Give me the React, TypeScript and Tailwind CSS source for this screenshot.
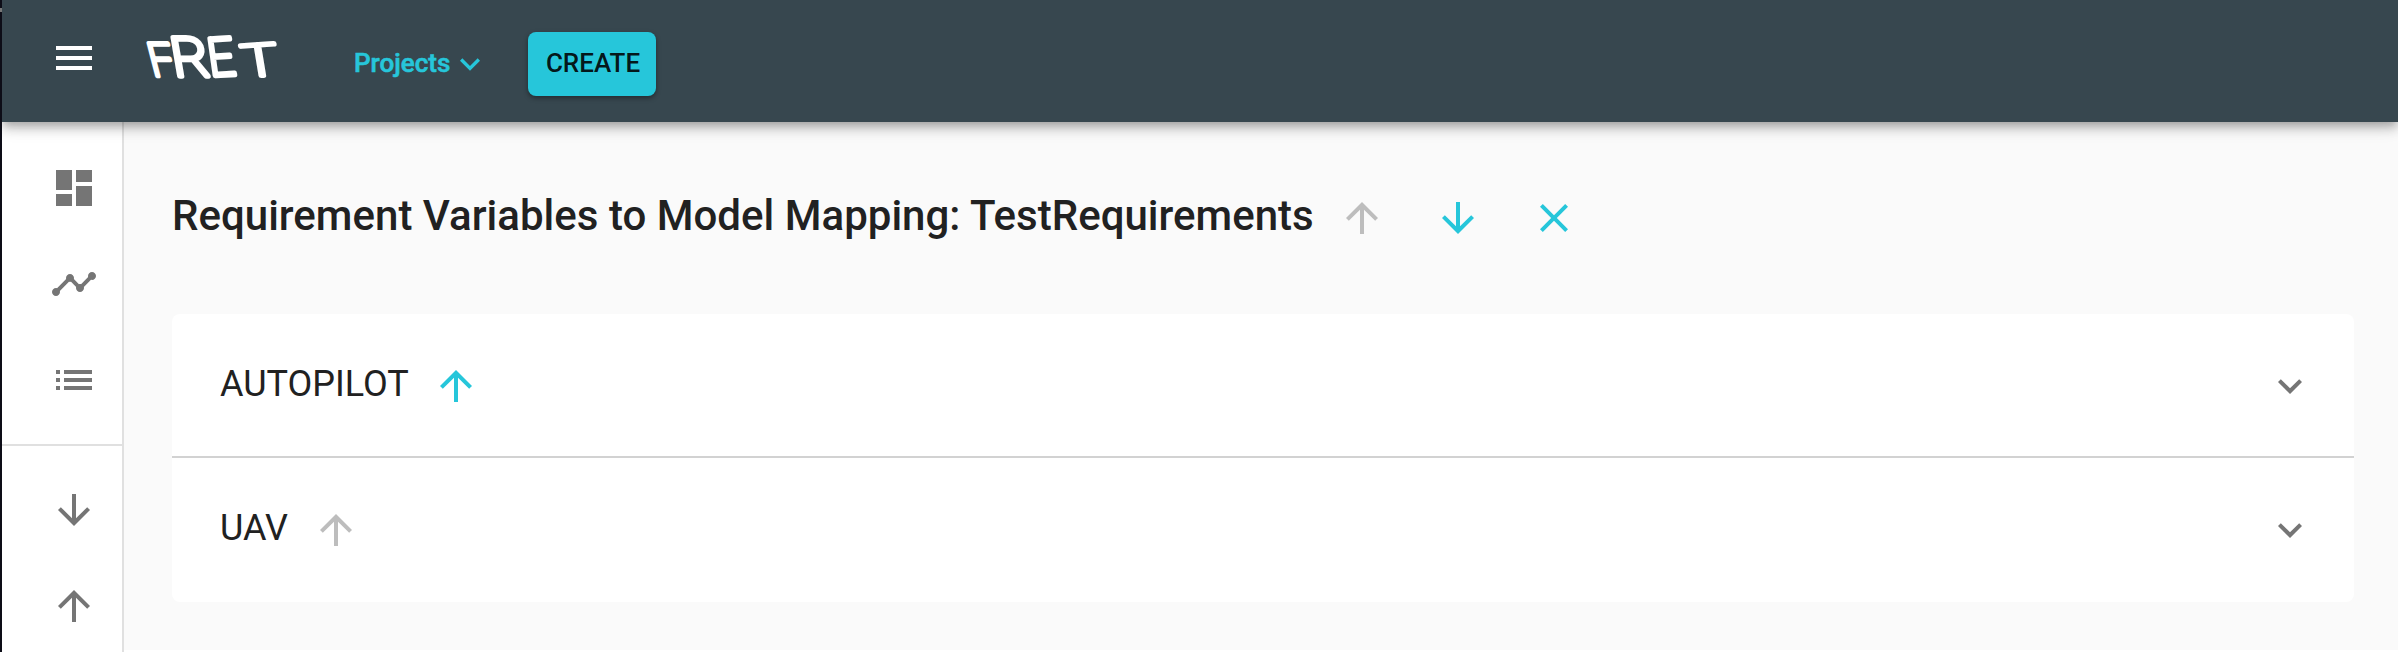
import React from "react";

const ICONS = {
  menu: "M3 18h18v-2H3v2zm0-5h18v-2H3v2zm0-7v2h18V6H3z",
  dashboard: "M3 13h8V3H3v10zm0 8h8v-6H3v6zm10 0h8V11h-8v10zm0-18v6h8V3h-8z",
  timeline:
    "M23 8c0 1.1-.9 2-2 2-.18 0-.35-.02-.51-.07l-3.56 3.55c.05.16.07.34.07.52 0 1.1-.9 2-2 2s-2-.9-2-2c0-.18.02-.36.07-.52l-2.55-2.55c-.16.05-.34.07-.52.07s-.36-.02-.52-.07l-4.55 4.56c.05.16.07.33.07.51 0 1.1-.9 2-2 2s-2-.9-2-2 .9-2 2-2c.18 0 .35.02.51.07l4.56-4.55C8.02 9.36 8 9.18 8 9c0-1.1.9-2 2-2s2 .9 2 2c0 .18-.02.36-.07.52l2.55 2.55c.16-.05.34-.07.52-.07s.36.02.52.07l3.55-3.56C19.02 8.35 19 8.18 19 8c0-1.1.9-2 2-2s2 .9 2 2z",
  list: "M3 13h2v-2H3v2zm0 4h2v-2H3v2zm0-8h2V7H3v2zm4 4h14v-2H7v2zm0 4h14v-2H7v2zM7 7v2h14V7H7z",
  down: "M20 12l-1.41-1.41L13 16.17V4h-2v12.17l-5.58-5.59L4 12l8 8 8-8z",
  up: "M4 12l1.41 1.41L11 7.83V20h2V7.83l5.58 5.59L20 12l-8-8-8 8z",
  close:
    "M19 6.41L17.59 5 12 10.59 6.41 5 5 6.41 10.59 12 5 17.59 6.41 19 12 13.41 17.59 19 19 17.59 13.41 12z",
  expand: "M16.59 8.59L12 13.17 7.41 8.59 6 10l6 6 6-6z",
};

function Icon({ name, className = "size-12" }: { name: keyof typeof ICONS; className?: string }) {
  return (
    <svg viewBox="0 0 24 24" fill="currentColor" className={`shrink-0 ${className}`}>
      <path d={ICONS[name]} />
    </svg>
  );
}

function Logo() {
  const letters = [
    { c: "F", t: "matrix(0.94 0.0 0.26 1 153 76)" },
    { c: "R", t: "matrix(1.24 0 0.2 1.17 174.5 76)" },
    { c: "E", t: "matrix(1 -0.06 0.16 1.13 210.5 76)" },
    { c: "T", t: "matrix(1.3 -0.09 0.16 0.96 244.5 77)" },
  ];
  return (
    <svg
      viewBox="130 10 170 90"
      className="h-[90px] w-[170px] shrink-0 overflow-visible fill-white stroke-white font-['Roboto']"
      strokeWidth="4.6"
      strokeLinejoin="round"
      fontSize="46"
      fontWeight="100"
    >
      {letters.map((l) => (
        <text key={l.c} transform={l.t}>
          {l.c}
        </text>
      ))}
    </svg>
  );
}

function Row({ label, active }: { label: string; active?: boolean }) {
  return (
    <div
      className={
        active
          ? "flex h-36 items-start border-b-2 border-[#d2d2d2] pt-12 pr-10 pl-12"
          : "flex h-36 items-start pt-12 pr-10 pl-12"
      }
    >
      <span className="-mt-[5px] text-[36px] leading-[54px]">{label}</span>
      <Icon name="up" className={active ? "ml-[23px] size-12 text-[#26c6da]" : "ml-6 size-12 text-[#bdbdbd]"} />
      <Icon name="expand" className="ml-auto size-12 text-[#757575]" />
    </div>
  );
}

export default function App() {
  return (
    <div className="flex h-[652px] w-[2398px] overflow-hidden bg-[#fafafa] font-['Roboto',sans-serif] text-[#212121]">
      <div className="w-[2px] shrink-0 bg-[#0d0d17] pt-2">
        <div className="h-1 bg-[#777]" />
      </div>
      <div className="flex min-w-0 grow flex-col overflow-hidden">
        <header className="z-10 flex h-[122px] shrink-0 items-start bg-[#37474f] pl-12 shadow-[0_4px_8px_-2px_rgba(0,0,0,0.2),0_8px_10px_0_rgba(0,0,0,0.14),0_2px_20px_0_rgba(0,0,0,0.12)]">
          <Icon name="menu" className="mt-[34px] size-12 text-white" />
          <div className="mt-[10px] ml-8">
            <Logo />
          </div>
          <button className="mt-11 ml-[54px] flex h-10 w-[136px] items-center justify-between text-[26px] font-medium text-[#26c6da]">
            <span className="-mt-[2px] [-webkit-text-stroke:0.6px_currentColor]">Projects</span>
            <Icon name="expand" className="size-10" />
          </button>
          <button className="mt-8 ml-[38px] h-16 w-32 rounded-lg bg-[#26c6da] pb-[2px] pl-[2px] text-[26px] font-medium text-black/90 shadow-[0_2px_5px_rgba(0,0,0,0.4)]">
            CREATE
          </button>
        </header>
        <div className="flex min-h-0 grow">
          <nav className="flex w-[122px] shrink-0 flex-col border-r-2 border-[#e0e0e0] bg-white text-[#757575]">
            <div className="flex h-[322px] flex-col gap-12 pt-[42px] pl-12">
              <Icon name="dashboard" />
              <Icon name="timeline" />
              <Icon name="list" />
            </div>
            <div className="flex grow flex-col gap-12 border-t-2 border-[#e0e0e0] pt-10 pl-12">
              <Icon name="down" />
              <Icon name="up" />
            </div>
          </nav>
          <main className="flex min-w-0 grow flex-col border-b-2 border-white pr-11 pl-12">
            <div className="mt-[60px] flex h-[68px] items-center">
              <h1 className="text-[42px] leading-[60px] font-medium tracking-[0.02px] whitespace-nowrap">
                Requirement Variables to Model Mapping: TestRequirements
              </h1>
              <div className="mt-1 ml-6 flex gap-12 text-[#26c6da]">
                <Icon name="up" className="size-12 text-[#bdbdbd]" />
                <Icon name="down" />
                <Icon name="close" />
              </div>
            </div>
            <section className="mt-16 rounded-lg bg-white">
              <Row label="AUTOPILOT" active />
              <Row label="UAV" />
            </section>
          </main>
        </div>
      </div>
    </div>
  );
}
